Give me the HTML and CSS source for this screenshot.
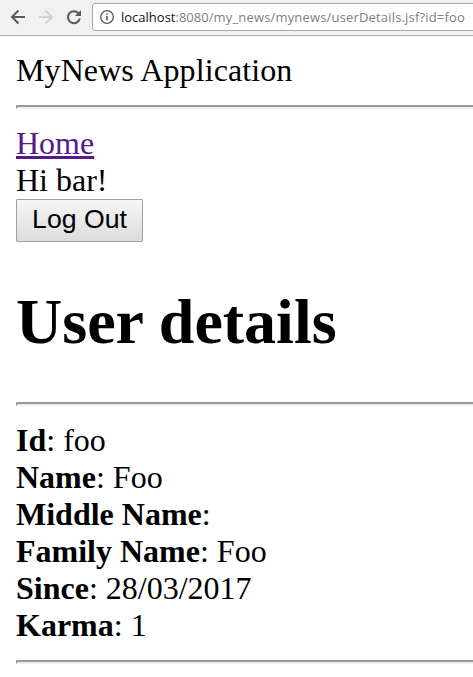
FILE: index.html
```html
<!DOCTYPE html>
<html lang="en">
<head>
<meta charset="utf-8">
<title>User details</title>
<link rel="stylesheet" href="styles.css">
</head>
<body>
<header class="toolbar">
  <svg class="nav" viewBox="0 0 88 36" width="88" height="36" fill="none">
    <path d="M25 17H12M18.500 10.500L12 17L18.500 23.500" stroke="#5a5a5a" stroke-width="2"/>
    <path d="M39 17H52M45.500 10.500L52 17L45.500 23.500" stroke="#d2d2d2" stroke-width="2"/>
    <path d="M78.300 13A6 6 0 1 0 79.800 18.500" stroke="#5a5a5a" stroke-width="2"/>
    <path d="M81 10V16H75Z" fill="#5a5a5a"/>
  </svg>
  <div class="address">
    <svg class="info" viewBox="0 0 14 14" width="14" height="14" fill="none" stroke="#5a5a5a">
      <circle cx="7" cy="7" r="6.300" stroke-width="1.300"/>
      <path d="M7 6V10.500M7 3.500V5" stroke-width="1.600"/>
    </svg>
    <span class="url"><span class="host">localhost</span>:8080<span class="path">/my_news/mynews/userDetails.jsf?id=foo</span></span>
  </div>
</header>
<main class="page">
  <div class="brand">MyNews Application</div>
  <hr>
  <a class="home" href="#">Home</a>
  <div>Hi bar!</div>
  <button class="logout" type="button">Log Out</button>
  <h1>User details</h1>
  <hr>
  <div><b>Id</b>: foo</div>
  <div><b>Name</b>: Foo</div>
  <div><b>Middle Name</b>:</div>
  <div><b>Family Name</b>: Foo</div>
  <div><b>Since</b>: 28/03/2017</div>
  <div><b>Karma</b>: 1</div>
  <hr>
</main>
</body>
</html>
```
FILE: styles.css
```css
* { box-sizing: border-box; }
body { margin: 0; background: #fff; color: #000; overflow: hidden; }
.toolbar { display: flex; height: 36px; background: #f1f1f1; border-bottom: 1px solid #b0b0b0; overflow: hidden; }
.nav { flex: none; }
.address { display: flex; align-items: center; flex: none; width: 400px; height: 28px; margin-top: 3px; margin-left: 4px; padding-left: 7px; background: #fff; border: 1px solid #a8a8a8; border-radius: 3px; }
.info { flex: none; margin-right: 7px; }
.url { font: 13px/20px "Open Sans", sans-serif; color: #808080; white-space: nowrap; }
.host { color: #111; }
.path { letter-spacing: 0.17px; }
.page { padding: 16px 0 0 16px; font: 32px/37px "Liberation Serif", serif; }
.brand { letter-spacing: 0.1px; }
hr { height: 4px; margin: 16px 0; border: 2px solid; border-color: #9a9a9a #eee #eee #9a9a9a; border-right: 0; }
.home { display: block; width: max-content; color: #551a8b; text-decoration: underline 3px; }
.logout { display: block; width: 127px; height: 43px; padding: 0 0 3px; font: 26.667px/30px "Liberation Sans", sans-serif; color: #000; background: linear-gradient(#f6f6f6, #dcdcdc); border: 1px solid #a0a0a0; border-radius: 1px; }
h1 { margin: 43px 0; font-size: 64px; line-height: 74px; font-weight: bold; }
```
